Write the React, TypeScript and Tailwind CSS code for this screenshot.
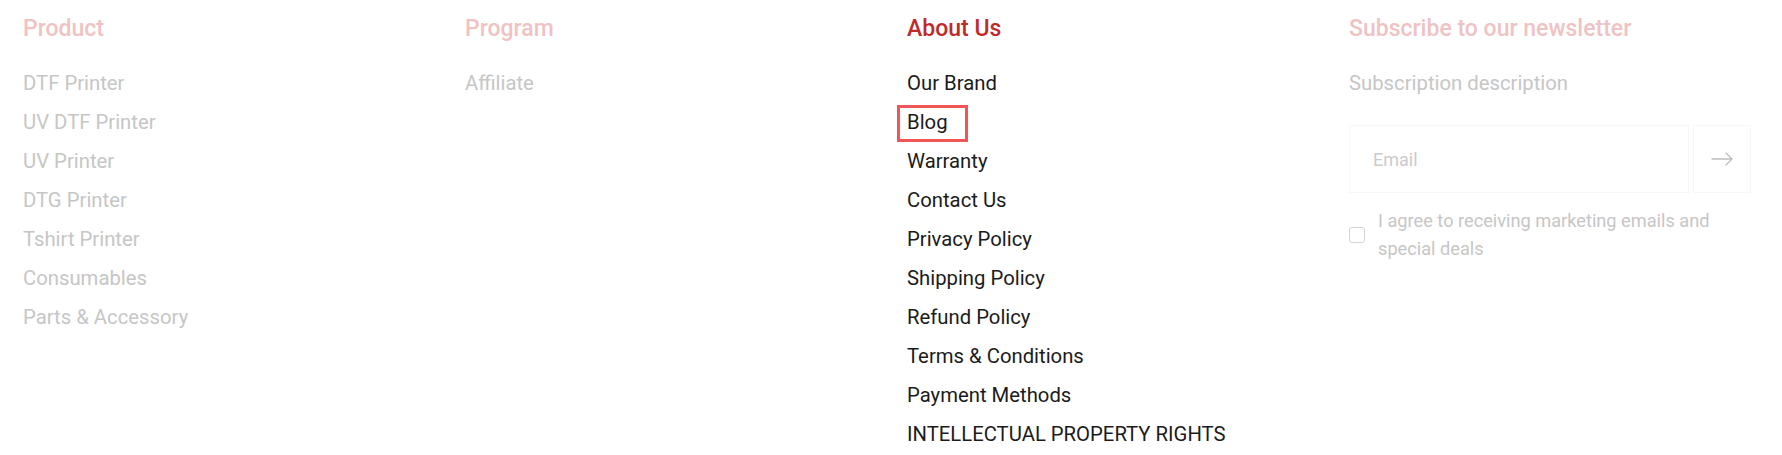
import React from "react";

const productLinks = [
  "DTF Printer",
  "UV DTF Printer",
  "UV Printer",
  "DTG Printer",
  "Tshirt Printer",
  "Consumables",
  "Parts & Accessory",
];

const programLinks = ["Affiliate"];

const aboutLinks = [
  "Our Brand",
  "Blog",
  "Warranty",
  "Contact Us",
  "Privacy Policy",
  "Shipping Policy",
  "Refund Policy",
  "Terms & Conditions",
  "Payment Methods",
  "INTELLECTUAL PROPERTY RIGHTS",
];

const FadedColumn = ({ title, links }: { title: string; links: string[] }) => (
  <div className="flex flex-col">
    <h3 className="text-[23px] leading-[30px] font-medium text-[#efc3c3]">{title}</h3>
    <ul className="mt-[20px] flex flex-col">
      {links.map((l) => (
        <li key={l} className="text-[20.3px] leading-[39px] text-[#c6c6c6]">
          {l}
        </li>
      ))}
    </ul>
  </div>
);

const ArrowIcon = () => (
  <svg width="22" height="14" viewBox="0 0 22 14" fill="none" stroke="#bdbdbd" strokeWidth="1.3" strokeLinecap="round" strokeLinejoin="round">
    <path d="M1 7H21M15 1l6 6-6 6" />
  </svg>
);

export default function App() {
  return (
    <div className="w-[1782px] h-[455px] bg-white grid grid-cols-4 gap-x-8 px-[23px] pt-[14px] font-['Roboto',sans-serif] overflow-hidden">
      <FadedColumn title="Product" links={productLinks} />
      <FadedColumn title="Program" links={programLinks} />

      <div className="flex flex-col">
        <h3 className="text-[23px] leading-[30px] font-medium text-[#c02a2a]">About Us</h3>
        <ul className="mt-[20px] flex flex-col">
          {aboutLinks.map((l) => (
            <li key={l} className="text-[20.3px] leading-[39px] text-[#1b1b1b]">
              {l === "Blog" ? (
                <span className="relative inline-block">
                  {l}
                  <span className="absolute -left-[10px] -right-[20px] top-[2px] bottom-0 border-[3px] border-[#f25555] pointer-events-none" />
                </span>
              ) : (
                l
              )}
            </li>
          ))}
        </ul>
      </div>

      <div className="flex flex-col">
        <h3 className="text-[23px] leading-[30px] font-medium text-[#efc3c3]">Subscribe to our newsletter</h3>
        <p className="mt-[20px] text-[20.3px] leading-[39px] text-[#c6c6c6]">Subscription description</p>
        <div className="mt-[22px] flex h-[68px] w-[402px] gap-[4px]">
          <div className="flex flex-1 items-center border border-[#f7f7f7] pl-[23px] text-[18px] text-[#cbcbcb]">Email</div>
          <div className="flex w-[58px] items-center justify-center border border-[#f7f7f7]">
            <ArrowIcon />
          </div>
        </div>
        <div className="mt-[14px] flex items-center gap-[13px]">
          <span className="h-[16px] w-[16px] shrink-0 rounded-[3px] border border-[#d4d4d4]" />
          <span className="text-[18.2px] leading-[28px] text-[#c6c6c6]">
            I agree to receiving marketing emails and
            <br />
            special deals
          </span>
        </div>
      </div>
    </div>
  );
}
